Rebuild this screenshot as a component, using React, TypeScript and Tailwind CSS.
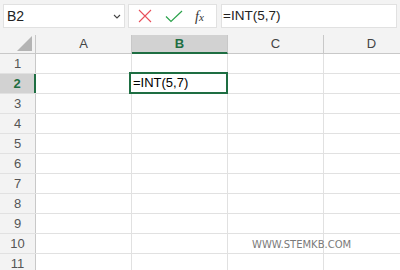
import React from 'react';

const COLS = ['A', 'B', 'C', 'D'];
const ROWS = [1, 2, 3, 4, 5, 6, 7, 8, 9, 10, 11];

function Cell({ row, col }: { row: number; col: string }) {
  const selected = row === 2 && col === 'B';
  return (
    <div className="relative h-full w-[96px] shrink-0 border-r border-[#e1e1e1]">
      {selected && (
        <div className="absolute left-[-3px] top-[-2px] z-10 h-[22px] w-[99px] border-2 border-[#1e6e42] bg-white pl-[2px] text-[13px] leading-[18px] text-black">
          =INT(5,7)
        </div>
      )}
      {row === 10 && col === 'C' && (
        <div className="absolute left-[24px] top-[3px] whitespace-nowrap font-['DejaVu_Sans',sans-serif] text-[10px] text-[#7a7a7a]">
          WWW.STEMKB.COM
        </div>
      )}
    </div>
  );
}

export default function App() {
  return (
    <div className="h-[270px] w-[400px] overflow-hidden bg-white font-['Liberation_Sans',Arial,sans-serif]">
      {/* formula bar */}
      <div className="flex h-[35px] items-start bg-[#f3f3f3] px-[3px] pt-[4px]">
        <div className="flex h-[24px] w-[122px] items-center justify-between border border-[#e1e1e1] bg-white pl-[3px] pr-[2px]">
          <span className="text-[14px] text-[#222]">B2</span>
          <svg width="8" height="5" viewBox="0 0 8 5" className="mr-[1px]">
            <path d="M1 1 L4 4 L7 1" fill="none" stroke="#444" strokeWidth="1.1" />
          </svg>
        </div>
        <div className="ml-[3px] flex h-[24px] w-[89px] items-center border border-[#e1e1e1] bg-white">
          <svg width="14" height="14" viewBox="0 0 14 14" className="ml-[9px]">
            <path d="M1 1 L13 13 M13 1 L1 13" stroke="#e8505b" strokeWidth="1.1" fill="none" />
          </svg>
          <svg width="18" height="13" viewBox="0 0 18 13" className="ml-[13px]">
            <path d="M1 6.5 L6 11.5 L17 1" stroke="#2aa24b" strokeWidth="1.2" fill="none" />
          </svg>
          <span className="ml-[12px] font-['Liberation_Serif',serif] text-[14px] italic text-[#333]">
            f<span className="text-[11px]">x</span>
          </span>
        </div>
        <div className="ml-[4px] flex h-[24px] flex-1 items-center border border-[#e1e1e1] bg-white pl-[1px]">
          <span className="text-[13.5px] text-[#222]">=INT(5,7)</span>
        </div>
      </div>

      {/* column headers */}
      <div className="flex h-[19px] bg-[#f3f3f3]">
        <div className="relative h-full w-[36px] shrink-0 border-b border-r border-[#c8c8c8]">
          <div className="absolute bottom-[2px] right-[3px] h-0 w-0 border-b-[15px] border-l-[15px] border-b-[#b4b4b4] border-l-transparent" />
        </div>
        {COLS.map((c) => (
          <div
            key={c}
            className={
              c === 'B'
                ? 'flex h-full w-[96px] shrink-0 items-center justify-center border-b-2 border-r border-b-[#1e6e42] border-r-[#c8c8c8] bg-[#d2d2d2] text-[13px] font-bold text-[#1e6e42]'
                : 'flex h-full w-[96px] shrink-0 items-center justify-center border-b border-r border-[#c8c8c8] text-[13px] text-[#444]'
            }
          >
            {c}
          </div>
        ))}
      </div>

      {/* rows */}
      {ROWS.map((r) => (
        <div key={r} className="flex h-[20px] border-b border-[#e1e1e1]">
          <div
            className={
              r === 2
                ? 'flex h-full w-[36px] shrink-0 items-center justify-center border-r-2 border-[#1e6e42] bg-[#d2d2d2] text-[13px] font-bold text-[#1e6e42]'
                : 'flex h-full w-[36px] shrink-0 items-center justify-center border-r border-[#c8c8c8] bg-[#f3f3f3] text-[13px] text-[#555]'
            }
          >
            {r}
          </div>
          {COLS.map((c) => (
            <Cell key={c} row={r} col={c} />
          ))}
        </div>
      ))}
    </div>
  );
}
